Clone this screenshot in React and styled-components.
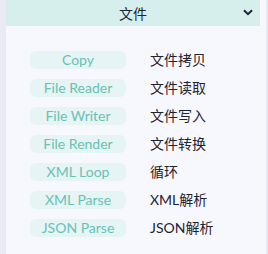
import React from "react";
import styled, { createGlobalStyle } from "styled-components";

const GlobalStyle = createGlobalStyle`
  html, body {
    margin: 0;
    padding: 0;
    background: #ebecf5;
  }
  body {
    font-family: "Lato", "Noto Sans CJK SC", sans-serif;
  }
`;

const Page = styled.div`
  width: 268px;
  height: 254px;
  display: flex;
  box-sizing: border-box;
  padding-left: 6px;
  padding-right: 2px;
  background: #e9eaf4;
`;

const Panel = styled.div`
  flex: 1;
  background: #f7f8fe;
  display: flex;
  flex-direction: column;
`;

const Header = styled.div`
  width: 254px;
  height: 26px;
  background: #d6eeec;
  display: flex;
  align-items: center;
  justify-content: center;
  position: relative;
  font-size: 14px;
  color: #1c2430;
`;

const Chevron = styled.svg`
  position: absolute;
  right: 7px;
  top: 9px;
`;

const List = styled.div`
  display: flex;
  flex-direction: column;
  gap: 10px;
  padding: 25px 0 0 24px;
`;

const Row = styled.div`
  display: flex;
  align-items: center;
  gap: 24px;
  height: 18px;
`;

const Pill = styled.div`
  width: 96px;
  height: 18px;
  border-radius: 6px;
  background: #e6f4f3;
  color: #66c2b6;
  font-size: 14px;
  display: flex;
  align-items: center;
  justify-content: center;
  line-height: 1;
`;

const Label = styled.div`
  font-size: 14px;
  color: #1e2330;
  line-height: 1;
`;

const items = [
  ["Copy", "文件拷贝"],
  ["File Reader", "文件读取"],
  ["File Writer", "文件写入"],
  ["File Render", "文件转换"],
  ["XML Loop", "循环"],
  ["XML Parse", "XML解析"],
  ["JSON Parse", "JSON解析"],
];

export default function App() {
  return (
    <>
      <GlobalStyle />
      <Page>
        <Panel>
          <Header>
            文件
            <Chevron width="10" height="7" viewBox="0 0 10 7">
              <path d="M1 1.2 L5 5.2 L9 1.2" fill="none" stroke="#1a2636" strokeWidth="2" />
            </Chevron>
          </Header>
          <List>
            {items.map(([en, zh]) => (
              <Row key={en}>
                <Pill>{en}</Pill>
                <Label>{zh}</Label>
              </Row>
            ))}
          </List>
        </Panel>
      </Page>
    </>
  );
}
